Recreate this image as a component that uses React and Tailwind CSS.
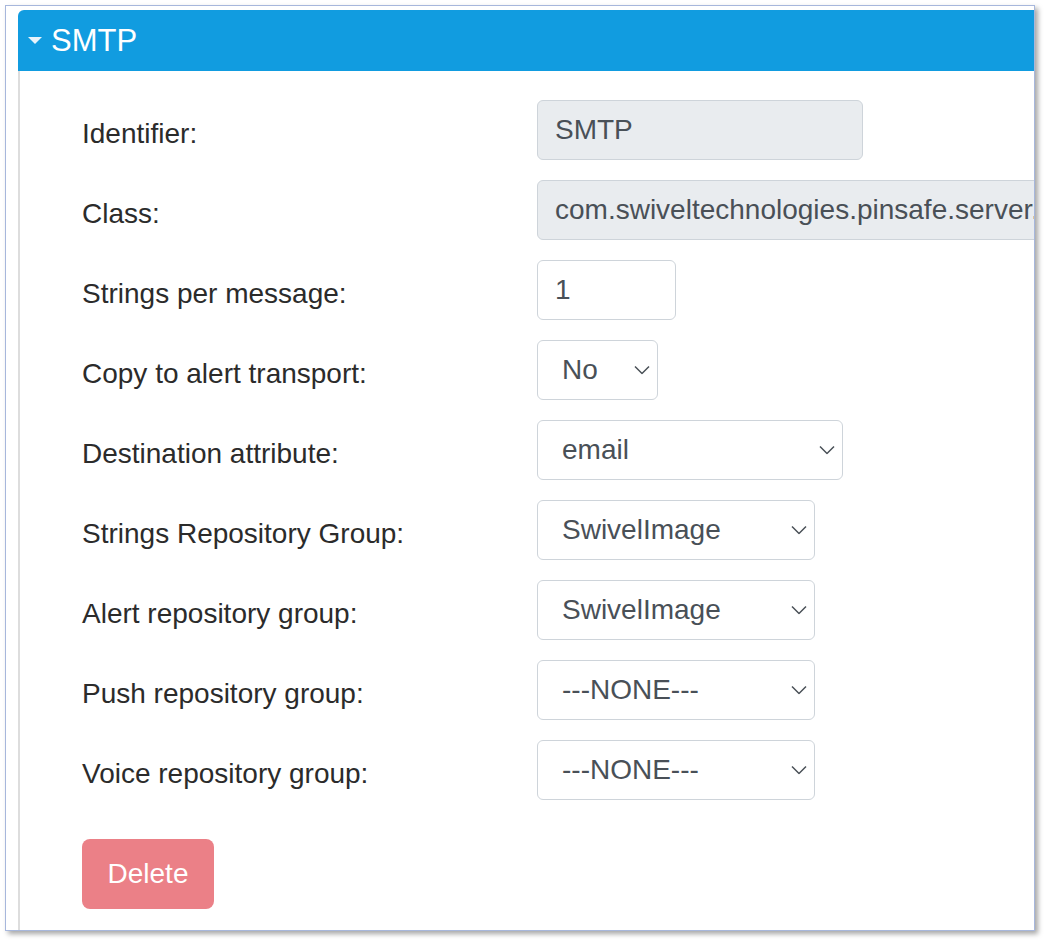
const font = { fontFamily: '"Liberation Sans", Arial, sans-serif' };

const Chevron = () => (
  <svg className="absolute right-[8px] top-1/2 -translate-y-1/2 pointer-events-none" width="16" height="9" viewBox="0 0 16 9">
    <polyline points="1,1 8,8 15,1" fill="none" stroke="#495057" strokeWidth="1.5" />
  </svg>
);

const SelectBox = ({ value, width }) => (
  <div className={`relative h-[60px] ${width}`}>
    <select
      defaultValue={value}
      className="appearance-none w-full h-full border border-[#ced4da] rounded-[6px] bg-white pl-[24px] text-[28px] text-[#495057] outline-none"
      style={font}
    >
      <option>{value}</option>
    </select>
    <Chevron />
  </div>
);

const TextBox = ({ value, width, readOnly }) => (
  <input
    defaultValue={value}
    readOnly={readOnly}
    className={`h-[60px] ${width} border border-[#ced4da] rounded-[6px] ${readOnly ? 'bg-[#e9ecef]' : 'bg-white'} pl-[17px] text-[28px] text-[#495057] outline-none`}
    style={font}
  />
);

const rows = [
  { label: 'Identifier:', field: <TextBox value="SMTP" width="w-[326px]" readOnly /> },
  { label: 'Class:', field: <TextBox value="com.swiveltechnologies.pinsafe.server.transport.SMTPTransport" width="w-[700px]" readOnly /> },
  { label: 'Strings per message:', field: <TextBox value="1" width="w-[139px]" /> },
  { label: 'Copy to alert transport:', field: <SelectBox value="No" width="w-[121px]" /> },
  { label: 'Destination attribute:', field: <SelectBox value="email" width="w-[306px]" /> },
  { label: 'Strings Repository Group:', field: <SelectBox value="SwivelImage" width="w-[278px]" /> },
  { label: 'Alert repository group:', field: <SelectBox value="SwivelImage" width="w-[278px]" /> },
  { label: 'Push repository group:', field: <SelectBox value="---NONE---" width="w-[278px]" /> },
  { label: 'Voice repository group:', field: <SelectBox value="---NONE---" width="w-[278px]" /> },
];

export default function App() {
  return (
    <div className="w-[1048px] h-[944px] bg-white pt-[5px] pl-[5px]" style={font}>
      {/* frame */}
      <div className="w-[1030px] h-[926px] border border-[#a7b7dc] bg-white shadow-[3px_3px_5px_rgba(0,0,0,0.35)] overflow-hidden pl-[12px] pt-[4px]">
        <div className="w-[1200px] h-full flex flex-col">
          {/* header */}
          <div className="h-[61px] shrink-0 bg-[#119ce0] rounded-tl-[6px] flex items-center pl-[10px] gap-[9px] text-white">
            <svg width="14" height="8" viewBox="0 0 14 8">
              <polygon points="0,0 14,0 7,7" fill="#e8f3fb" />
            </svg>
            <span className="text-[31px] leading-none">SMTP</span>
          </div>

          {/* body */}
          <div className="flex-1 border-l-2 border-[#dddddd] pl-[62px] pt-[29px]">
            <div className="grid grid-cols-[455px_1fr] gap-y-[20px]">
              {rows.map((r) => (
                <div key={r.label} className="contents">
                  <div className="h-[60px] flex items-center pt-[8px] text-[28px] text-[#2b2b2b] leading-[34px]">
                    {r.label}
                  </div>
                  <div className="h-[60px] flex items-center">{r.field}</div>
                </div>
              ))}
            </div>
            <button className="mt-[39px] w-[132px] h-[70px] rounded-[8px] bg-[#eb8087] text-white text-[28px]" style={font}>
              Delete
            </button>
          </div>
        </div>
      </div>
    </div>
  );
}
